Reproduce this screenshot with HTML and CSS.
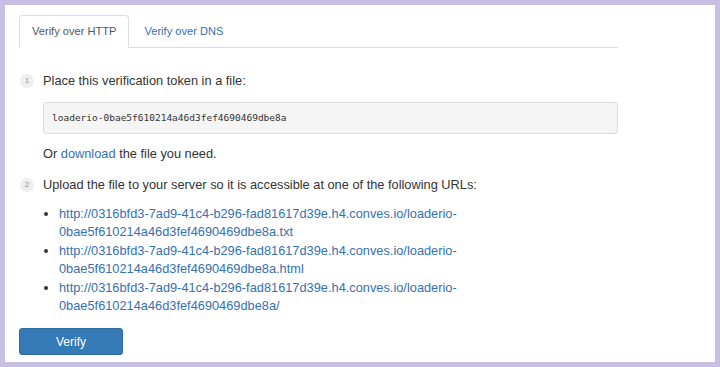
FILE: index.html
```html
<!DOCTYPE html>
<html>
<head>
  <title>Verify domain</title>
  <link rel="stylesheet" href="styles.css">
</head>
<body>

<div class="panel">
  <ul class="tabs">
    <li class="tab active">Verify over HTTP</li>
    <li class="tab"><a href="#">Verify over DNS</a></li>
  </ul>

  <div class="step">
    <span class="num">1</span>
    <p>Place this verification token in a file:</p>
  </div>
  <div class="token">loaderio-0bae5f610214a46d3fef4690469dbe8a</div>
  <p class="note">Or <a href="#">download</a> the file you need.</p>

  <div class="step">
    <span class="num">2</span>
    <p>Upload the file to your server so it is accessible at one of the following URLs:</p>
  </div>
  <ul class="urls">
    <li><a href="#">http://0316bfd3-7ad9-41c4-b296-fad81617d39e.h4.conves.io/loaderio-<br>0bae5f610214a46d3fef4690469dbe8a.txt</a></li>
    <li><a href="#">http://0316bfd3-7ad9-41c4-b296-fad81617d39e.h4.conves.io/loaderio-<br>0bae5f610214a46d3fef4690469dbe8a.html</a></li>
    <li><a href="#">http://0316bfd3-7ad9-41c4-b296-fad81617d39e.h4.conves.io/loaderio-<br>0bae5f610214a46d3fef4690469dbe8a/</a></li>
  </ul>

  <button class="verify-btn">Verify</button>
</div>

</body>
</html>
```

FILE: styles.css
```css
body {
  margin: 0;
  background-color: #c8c0e4;
  font-family: 'Liberation Sans', Arial, sans-serif;
  font-size: 12.8px;
  line-height: 18.5px;
  color: #333;
  padding: 5px;
  height: 367px;
  box-sizing: border-box;
}

a {
  color: #3571ad;
  text-decoration: none;
}

p {
  margin: 0;
}

.panel {
  background: white;
  height: 357px;
  box-sizing: border-box;
  padding: 10px 14px 0 14px;
}

.tabs {
  list-style: none;
  margin: 0;
  padding: 0;
  max-width: 599px;
  display: flex;
  gap: 2px;
  border-bottom: 1px solid #ddd;
}

.tab {
  font-size: 11.1px;
  padding: 6px 12px 6px 12px;
  margin-bottom: -1px;
  border: 1px solid transparent;
  border-radius: 4px 4px 0 0;
}

.tab.active {
  background: white;
  border-color: #ddd;
  border-bottom-color: white;
  color: #555;
}

.step {
  display: flex;
  align-items: center;
  margin-top: 24px;
}

.note + .step {
  margin-top: 12px;
}

.num {
  width: 14px;
  height: 14px;
  border-radius: 50%;
  background: #eee;
  color: #999;
  font-size: 8px;
  line-height: 14px;
  text-align: center;
  margin: 0 9px 0 1px;
  flex-shrink: 0;
}

.token {
  margin: 12px 0 0 24px;
  max-width: 575px;
  height: 32px;
  box-sizing: border-box;
  padding: 0 8px;
  background: #f5f5f5;
  border: 1px solid #dcdcdc;
  border-radius: 3px;
  font-family: 'DejaVu Sans Mono', 'Liberation Mono', monospace;
  font-size: 9.5px;
  line-height: 30px;
  color: #333;
}

.note {
  margin: 11px 0 0 24px;
}

.urls {
  margin: 11px 0 0 24px;
  padding-left: 16px;
}

.urls li {
  line-height: 18.4px;
}

.verify-btn {
  margin-top: 13px;
  width: 104px;
  height: 27px;
  background-color: #337ab7;
  border: 1px solid #2e6da4;
  border-radius: 3px;
  color: white;
  font-family: 'Liberation Sans', Arial, sans-serif;
  font-size: 12px;
  cursor: pointer;
}
```
